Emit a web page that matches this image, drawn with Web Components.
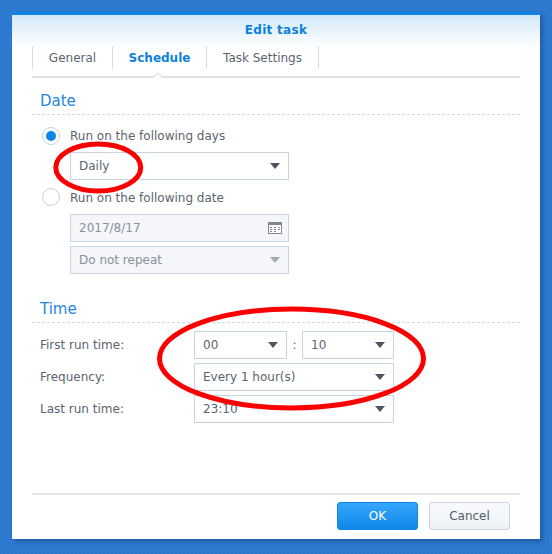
<!DOCTYPE html>
<html><head><meta charset="utf-8">
<style>
html,body{margin:0;padding:0}
body{width:552px;height:554px;box-sizing:border-box;padding:12px 12px 15px;background-color:#2c78cf;background-image:radial-gradient(#2f7dd4 1px,transparent 1.2px);background-size:4px 4px;font:12px/16px "DejaVu Sans",sans-serif;color:#4b5663;overflow:hidden}
</style></head><body>
<template id="t-dialog"><style>
:host{display:block;position:relative;height:527px;box-sizing:border-box;border-top:3px solid #0b86e8;background:linear-gradient(#d3e8f8,#fff 33px);box-shadow:3px 3px 4px rgba(20,60,120,.45);padding:0 20px}
.wrap{display:flex;flex-direction:column;height:100%}
.title{height:31px;padding-top:7px;box-sizing:border-box;text-align:center;font-weight:bold;font-size:12px;line-height:16px;color:#0b80dc;flex:none;letter-spacing:.3px}
.body{flex:1}
.foot{flex:none;box-sizing:border-box;border-top:2px solid #e3e5e8;height:46px;padding-top:7px;padding-right:10px;display:flex;justify-content:flex-end;align-items:flex-start;gap:11px}
</style><div class="wrap"><div class="title"><slot name="title"></slot></div><div class="body"><slot></slot></div><div class="foot"><slot name="foot"></slot></div></div><slot name="overlay"></slot></template>

<template id="t-tabs"><style>
:host{display:flex;position:relative;height:32px;box-sizing:border-box;border-bottom:2px solid #dfe3e8;padding-bottom:7px;margin-bottom:0}
.n{position:absolute;left:120px;bottom:-2px;width:12px;height:6px}
</style><slot></slot><svg class="n" viewBox="0 0 12 6"><path d="M0 6h1L6 1l5 5h1" fill="#fff" stroke="#dfe3e8" stroke-width="1.2"/></svg></template>

<template id="t-tab"><style>
:host{display:flex;align-items:center;justify-content:center;box-sizing:border-box;height:23px;border-left:1px solid #d5dfea;color:#5a6470;font-size:12px}
:host([last]){border-right:1px solid #d5dfea}
:host([active]){font-weight:bold;color:#0b80dc}
</style><slot></slot></template>

<template id="t-head"><style>
:host{display:block;box-sizing:border-box;height:var(--h,37px);padding-left:8px;padding-top:var(--pt,14px);color:#1f86e2;font-size:15px;line-height:18px;border-bottom:1px dashed #ccdcea}
</style><slot></slot></template>

<template id="t-radio"><style>
:host{display:flex;align-items:center;height:18px;gap:10px;padding-left:10px;color:#5a6470}
i{display:block;box-sizing:border-box;width:18px;height:18px;border-radius:50%;border:1px solid #c6d0db;background:#fff;position:relative}
span{padding-top:2px}
:host([checked]) span{padding-top:0}
:host([checked]) i::after{content:"";position:absolute;left:3px;top:3px;width:10px;height:10px;border-radius:50%;background:#0b86e8}
</style><i></i><span><slot></slot></span></template>

<template id="t-select"><style>
:host{display:flex;align-items:center;justify-content:space-between;box-sizing:border-box;height:28px;width:var(--w,219px);padding:0 8px 0 8px;border:1px solid #c9d4de;background:#fff;color:#5a6470;font-size:12px}
:host([disabled]){background:#f4f6fa;color:#8a919a}
.a{width:0;height:0;border-left:5px solid transparent;border-right:5px solid transparent;border-top:6px solid #4f5560;margin-right:0}
:host([disabled]) .a{border-top-color:#a4abb5}
::slotted(svg){display:block;margin-right:-2px}
</style><span><slot></slot></span><slot name="icon"><i class="a"></i></slot></template>

<template id="t-row"><style>
:host{display:flex;align-items:center;gap:0;padding-left:8px;color:#5a6470}
.l{width:154px;flex:none}
.c{display:flex;align-items:center}
</style><span class="l"><slot name="label"></slot></span><div class="c"><slot></slot></div></template>

<template id="t-btn"><style>
:host{display:flex;align-items:center;justify-content:center;box-sizing:border-box;width:81px;height:28px;border-radius:3px;border:1px solid #c9d3de;background:linear-gradient(#f8fafd,#eef2f7);color:#525c68;font-size:12px}
:host([primary]){border-color:#0f86e0;background:linear-gradient(#36a6fb,#0f88ea);color:#fff}
</style><slot></slot></template>

<template id="t-ring"><style>
:host{display:block;position:absolute;pointer-events:none}
svg{display:block;width:100%;height:100%;overflow:visible}
</style><svg viewBox="0 0 100 100" preserveAspectRatio="none"><ellipse cx="50" cy="50" rx="48" ry="48" fill="none" stroke="#fa0000" stroke-width="5" vector-effect="non-scaling-stroke"/></svg></template>

<x-dialog>
  <span slot="title">Edit task</span>
  <x-tabs>
    <x-tab style="width:80px">General</x-tab>
    <x-tab active style="width:94px">Schedule</x-tab>
    <x-tab last style="width:113px">Task Settings</x-tab>
  </x-tabs>
  <x-head>Date</x-head>
  <x-stack style="padding-top:12px">
    <x-radio checked>Run on the following days</x-radio>
    <x-select style="margin:7px 0 0 38px">Daily</x-select>
    <x-radio style="margin-top:8px">Run on the following date</x-radio>
    <x-select disabled style="margin:8px 0 0 38px">2017/8/17<svg slot="icon" width="14" height="12" viewBox="0 0 14 12"><rect x=".5" y=".5" width="13" height="11" fill="#fff" stroke="#7f8894"/><rect x="0" y="0" width="14" height="3" fill="#7f8894"/><path d="M2 5h2v1H2zM6 5h2v1H6zM10 5h2v1h-2zM2 7h2v1H2zM6 7h2v1H6zM10 7h2v1h-2zM2 9h2v1H2zM6 9h2v1H6z" fill="#7f8894"/></svg></x-select>
    <x-select disabled style="margin:4px 0 0 38px">Do not repeat</x-select>
  </x-stack>
  <x-head style="--h:49px;--pt:26px">Time</x-head>
  <x-stack style="padding-top:8px">
    <x-row><span slot="label">First run time:</span><x-select style="--w:93px">00</x-select><span style="width:15px;text-align:center">:</span><x-select style="--w:92px">10</x-select></x-row>
    <x-row style="margin-top:4px"><span slot="label">Frequency:</span><x-select style="--w:200px">Every 1 hour(s)</x-select></x-row>
    <x-row style="margin-top:4px"><span slot="label">Last run time:</span><x-select style="--w:200px">23:10</x-select></x-row>
  </x-stack>
  <x-btn slot="foot" primary>OK</x-btn>
  <x-btn slot="foot">Cancel</x-btn>
  <x-ring slot="overlay" style="left:41.75px;top:127.5px;width:88.5px;height:49px"></x-ring>
  <x-ring slot="overlay" style="left:142px;top:291.5px;width:275px;height:103px"></x-ring>
</x-dialog>
<script>
function def(tag,id){customElements.define(tag,class extends HTMLElement{constructor(){super();const r=this.attachShadow({mode:"open"});if(id)r.appendChild(document.getElementById(id).content.cloneNode(true));else r.innerHTML='<style>:host{display:block}</style><slot></slot>';}});}
def("x-dialog","t-dialog");def("x-tabs","t-tabs");def("x-tab","t-tab");def("x-head","t-head");def("x-radio","t-radio");def("x-select","t-select");def("x-row","t-row");def("x-btn","t-btn");def("x-ring","t-ring");def("x-stack");
</script>
</body></html>
